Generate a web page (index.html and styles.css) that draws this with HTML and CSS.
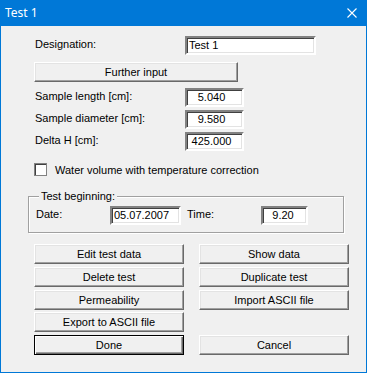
FILE: index.html
```html
<!doctype html>
<html>
  <head>
    <meta charset="utf-8">
    <title>Test 1</title>
    <link rel="stylesheet" href="styles.css">
  </head>
  <body>
    <div class="window">
      <div class="titlebar">
        <span class="title">Test 1</span>
        <svg class="close" width="10" height="10" viewBox="0 0 10 10">
          <path d="M0.5 0.5 L9.5 9.5 M9.5 0.5 L0.5 9.5" stroke="#fff" stroke-width="1.1" fill="none"/>
        </svg>
      </div>
      <div class="content">
        <div class="row designation">
          <span class="label">Designation:</span>
          <div class="field wide">Test 1</div>
        </div>
        <div class="btn further">Further input</div>
        <div class="row first">
          <span class="label">Sample length [cm]:</span>
          <div class="field num">5.040</div>
        </div>
        <div class="row">
          <span class="label">Sample diameter [cm]:</span>
          <div class="field num">9.580</div>
        </div>
        <div class="row">
          <span class="label">Delta H [cm]:</span>
          <div class="field num">425.000</div>
        </div>
        <label class="check">
          <span class="box"></span>
          Water volume with temperature correction
        </label>
        <div class="group">
          <span class="legend">Test beginning:</span>
          <div class="daterow">
            <span class="label short">Date:</span>
            <div class="field date">05.07.2007</div>
            <span class="label short">Time:</span>
            <div class="field time">9.20</div>
          </div>
        </div>
        <div class="buttons">
          <div class="btn">Edit test data</div>
          <div class="btn">Show data</div>
          <div class="btn">Delete test</div>
          <div class="btn">Duplicate test</div>
          <div class="btn">Permeability</div>
          <div class="btn">Import ASCII file</div>
          <div class="btn">Export to ASCII file</div>
          <div></div>
          <div class="btn default">Done</div>
          <div class="btn">Cancel</div>
        </div>
      </div>
    </div>
  </body>
</html>
```
FILE: styles.css
```css
html, body {
  margin: 0;
  padding: 0;
  background: #fff;
}
.window {
  width: 365px;
  height: 372px;
  border: 1px solid #0078d7;
  border-top: none;
  background: #f0f0f0;
  font-family: "Liberation Sans", Arial, sans-serif;
  font-size: 11px;
  color: #000;
}
.titlebar {
  height: 26px;
  margin: 0 -1px;
  background: #0078d7;
  display: flex;
  align-items: center;
  justify-content: space-between;
  padding: 0 10px 0 5px;
}
.title {
  font-family: "Noto Sans", "Open Sans", sans-serif;
  font-size: 12px;
  color: #fff;
  margin-top: -1px;
}
.close {
  margin-top: -1px;
}

.content {
  padding: 10px 0 0 33px;
}
.row {
  display: flex;
  align-items: center;
  height: 19px;
  margin-top: 3px;
}
.row.designation {
  margin-top: 0;
}
.row.first {
  margin-top: 6px;
}
.label {
  width: 150px;
  padding-left: 1px;
  margin-top: -4px;
}
.field {
  box-sizing: border-box;
  height: 19px;
  background: #fff;
  border-style: solid;
  border-width: 2px;
  border-color: #828282 #fff #fff #828282;
  box-shadow: inset 1px 1px 0 #404040, inset -1px -1px 0 #e3e3e3;
  line-height: 15px;
  padding: 0 2px;
  white-space: nowrap;
}
.field.wide {
  width: 131px;
}
.field.num {
  width: 59px;
  text-align: center;
  padding-right: 8px;
}
.btn {
  box-sizing: border-box;
  height: 20px;
  background: #f0f0f0;
  border-style: solid;
  border-width: 1px;
  border-color: #fff #696969 #696969 #fff;
  box-shadow: inset -1px -1px 0 #a0a0a0, inset 1px 1px 0 #e3e3e3;
  text-align: center;
  line-height: 18px;
}
.btn.further {
  width: 204px;
  margin-top: 7px;
}
.btn.default {
  border: 1px solid #000;
  box-shadow: inset 1px 1px 0 #fff, inset -1px -1px 0 #696969, inset -2px -2px 0 #a0a0a0;
}

.check {
  display: flex;
  align-items: center;
  margin-top: 12px;
  height: 13px;
}
.box {
  box-sizing: border-box;
  width: 13px;
  height: 13px;
  margin-right: 8px;
  background: #fff;
  border: 1px solid #828282;
  box-shadow: inset 1px 1px 0 #404040;
}

.group {
  margin: 20px 0 0 -6px;
  padding: 0 0 6px 6px;
  width: 316px;
  height: 37px;
  box-sizing: border-box;
  border: 1px solid #a0a0a0;
  box-shadow: 1px 1px 0 #fff, inset 1px 1px 0 #fff;
}
.legend {
  display: table;
  margin: -7px 0 0 4px;
  padding: 0 2px;
  line-height: 12px;
  background: #f0f0f0;
}
.daterow {
  display: flex;
  align-items: center;
  height: 19px;
  margin-top: 4px;
}
.label.short {
  width: 74px;
}
.field.date {
  width: 71px;
  margin-right: 5px;
}
.field.time {
  width: 47px;
  text-align: center;
  padding-right: 5px;
}

.buttons {
  margin-top: 11px;
  display: grid;
  grid-template-columns: 150px 150px;
  grid-auto-rows: 20px;
  column-gap: 15px;
  row-gap: 2.75px;
}
```
